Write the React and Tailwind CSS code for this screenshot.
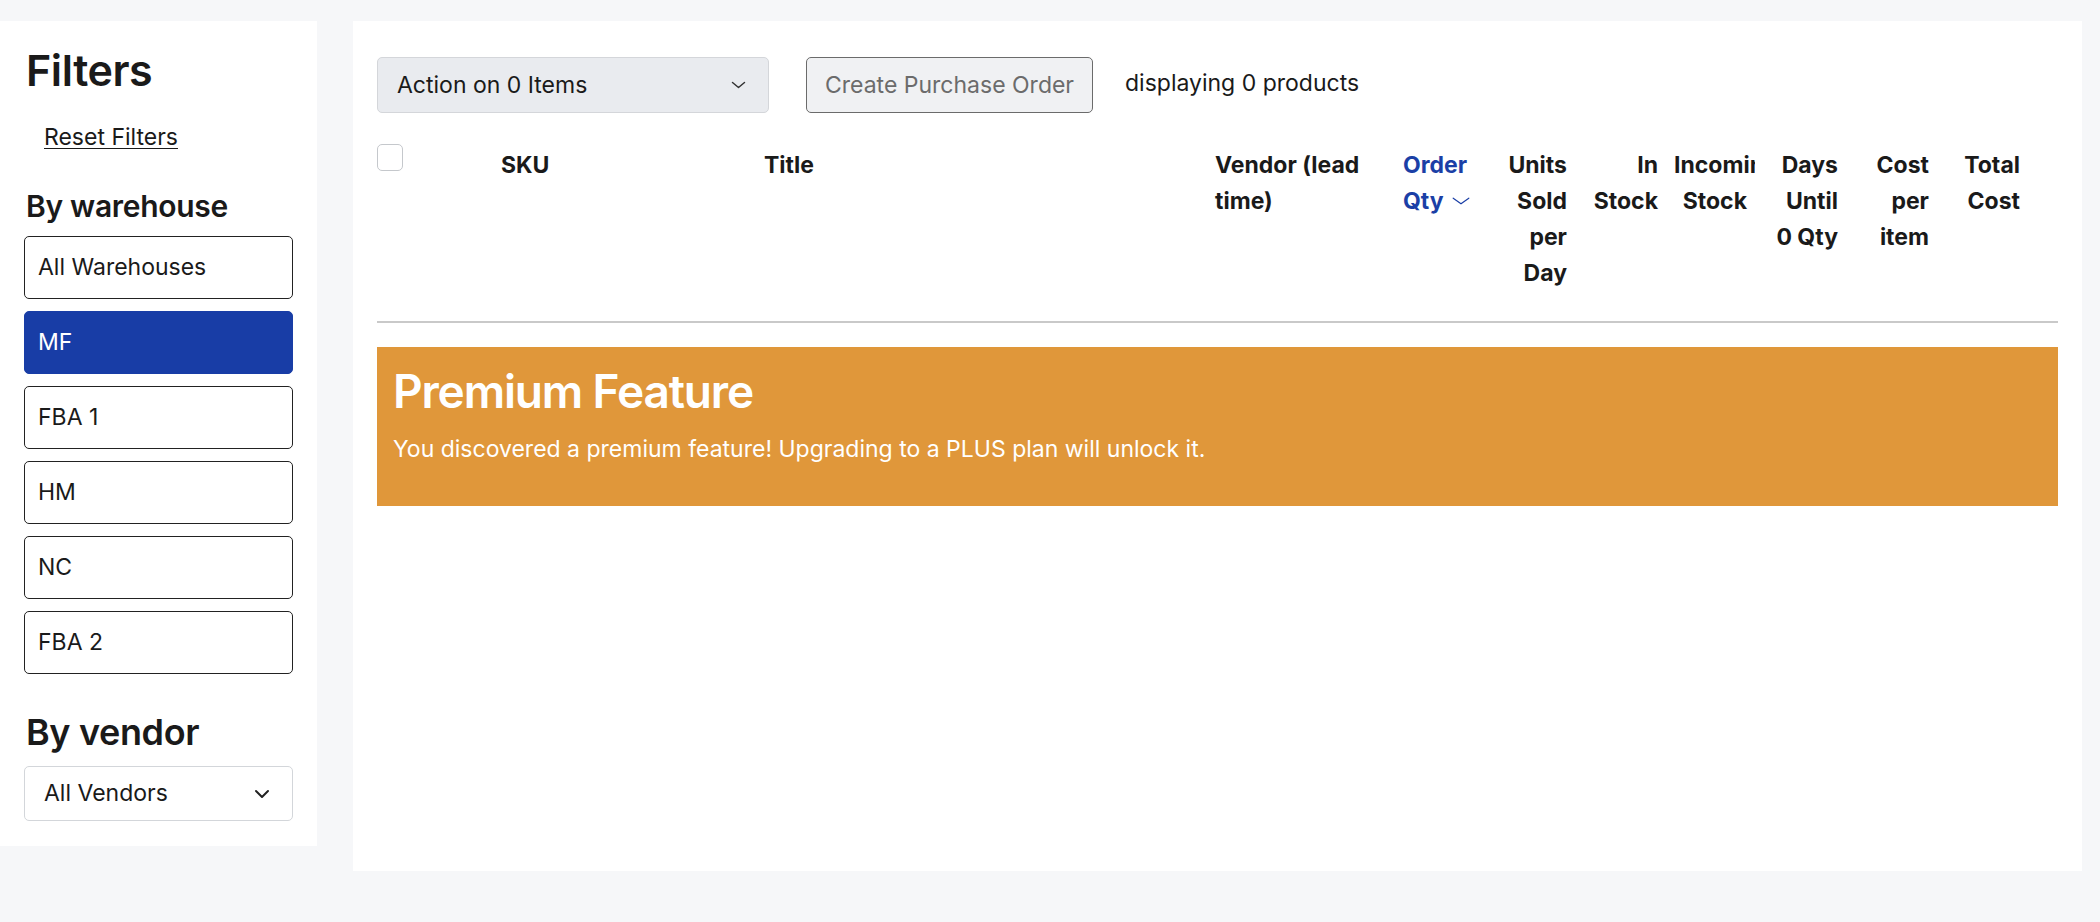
import React from "react";

const warehouses = ["All Warehouses", "MF", "FBA 1", "HM", "NC", "FBA 2"];

function Chevron({ w, h, sw, className }) {
  return (
    <svg width={w} height={h} viewBox={`0 0 ${w} ${h}`} className={className} fill="none">
      <path
        d={`M${sw} ${sw} L${w / 2} ${h - sw} L${w - sw} ${sw}`}
        stroke="currentColor"
        strokeWidth={sw}
        strokeLinecap="round"
        strokeLinejoin="round"
      />
    </svg>
  );
}

function Sidebar() {
  return (
    <aside className="w-[317px] shrink-0 bg-white pl-[24px] pr-[24px] pt-[23px] pb-[25px] text-[#1a1a1a]">
      <h1 className="pl-[2px] text-[43px] leading-[52px] font-semibold tracking-[-0.01em]">Filters</h1>
      <div className="mt-[23px] pl-[20px] text-[23px] leading-[36px]">
        <a className="underline underline-offset-[3px] decoration-1">Reset Filters</a>
      </div>
      <h2 className="mt-[33px] pl-[2px] text-[30px] leading-[36px] font-semibold tracking-[-0.01em]">By warehouse</h2>
      <div className="mt-[12px] flex flex-col gap-[12px]">
        {warehouses.map((w) => (
          <button
            key={w}
            className={
              w === "MF"
                ? "h-[63px] w-full rounded-[5px] border border-[#183da6] bg-[#183da6] pl-[13px] text-left text-[23px] text-white"
                : "h-[63px] w-full rounded-[5px] border border-[#222222] bg-white pl-[13px] text-left text-[23px] text-[#1a1a1a]"
            }
          >
            {w}
          </button>
        ))}
      </div>
      <h2 className="mt-[36px] pl-[2px] text-[36px] leading-[44px] font-semibold tracking-[-0.01em]">By vendor</h2>
      <div className="mt-[12px] flex h-[55px] items-center justify-between rounded-[5px] border border-[#d3d6da] bg-white pl-[19px] pr-[22px] text-[23px]">
        <span>All Vendors</span>
        <Chevron w={16} h={10} sw={2} className="text-[#222]" />
      </div>
    </aside>
  );
}

const cols = [
  { label: "", kind: "check" },
  { label: "SKU" },
  { label: "Title" },
  { label: "Vendor (lead time)" },
  { label: "Order Qty", kind: "sort" },
  { label: "Units Sold per Day", right: true },
  { label: "In Stock", right: true },
  { label: "Incoming Stock", right: true },
  { label: "Days Until 0\u00a0Qty", right: true },
  { label: "Cost per item", right: true },
  { label: "Total Cost", right: true },
  { label: "" },
];

function HeaderRow() {
  return (
    <div className="mt-[31px] grid grid-cols-[116px_263px_451px_188px_89px_91px_91px_89px_91px_91px_91px_30px] text-[23px] leading-[36px] font-bold text-[#1a1a1a]">
      {cols.map((c, i) => {
        if (c.kind === "check") {
          return (
            <div key={i}>
              <div className="h-[27px] w-[26px] rounded-[5px] border border-[#c5c8cc] bg-white" />
            </div>
          );
        }
        if (c.kind === "sort") {
          return (
            <div key={i} className="px-[8px] pt-[3px] text-[#1b3fa6]">
              Order
              <br />
              <span className="inline-flex items-center gap-[8px]">
                Qty
                <Chevron w={18} h={8} sw={1.2} className="text-[#1b3fa6]" />
              </span>
            </div>
          );
        }
        return (
          <div
            key={i}
            className={
              c.right
                ? "overflow-hidden px-[8px] pt-[3px] text-right"
                : "overflow-hidden px-[8px] pt-[3px]"
            }
          >
            {c.label}
          </div>
        );
      })}
    </div>
  );
}

function Main() {
  return (
    <main className="h-[850px] flex-1 bg-white pl-[24px] pr-[24px] pt-[36px] text-[#1a1a1a]">
      <div className="flex items-start">
        <div className="flex h-[56px] w-[392px] items-center justify-between rounded-[5px] border border-[#d4d6da] bg-[#e9ebef] pl-[19px] pr-[22px] text-[23px]">
          <span>Action on 0 Items</span>
          <Chevron w={15} h={8} sw={1.5} className="text-[#333]" />
        </div>
        <button className="ml-[37px] h-[56px] w-[287px] rounded-[5px] border border-[#6b6b6b] bg-[#f0f1f3] text-[23px] text-[#6b6b6b]">
          Create Purchase Order
        </button>
        <span className="ml-[32px] mt-[8px] text-[23px] leading-[36px]">displaying 0 products</span>
      </div>
      <HeaderRow />
      <div className="mt-[30px] h-[2px] bg-[#c9c9c9]" />
      <div className="mt-[24px] h-[159px] bg-[#e0973a] pl-[16px] pt-[16px] text-white">
        <div className="text-[46px] leading-[56px] font-semibold tracking-[-0.025em]">Premium Feature</div>
        <div className="mt-[12px] text-[23px] leading-[36px]">
          You discovered a premium feature! Upgrading to a PLUS plan will unlock it.
        </div>
      </div>
    </main>
  );
}

export default function App() {
  return (
    <div className="flex min-h-[922px] items-start gap-[36px] bg-[#f6f7f9] pr-[18px] pt-[21px] font-['Inter',sans-serif]">
      <Sidebar />
      <Main />
    </div>
  );
}
